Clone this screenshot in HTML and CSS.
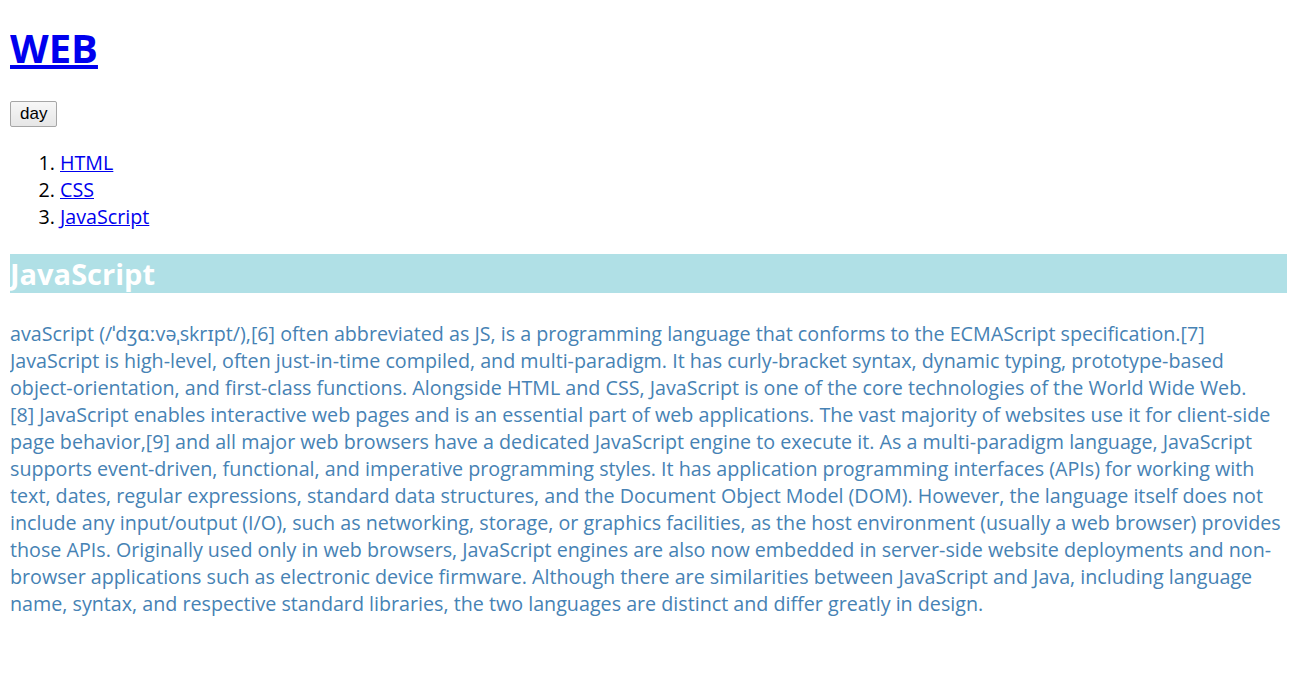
FILE: index.html
```html
<!DOCTYPE html>
<html>
<head>
<meta charset="utf-8">
<title>WEB</title>
<link rel="stylesheet" href="styles.css">
</head>
<body>
<h1 class="site-title"><a href="#">WEB</a></h1>
<input class="mode-btn" type="button" value="day">
<ol class="nav">
  <li><a href="#">HTML</a></li>
  <li><a href="#">CSS</a></li>
  <li><a href="#">JavaScript</a></li>
</ol>
<h2 class="topic">JavaScript</h2>
<p class="article">avaScript (/ˈdʒɑːvəˌskrɪpt/),[6] often abbreviated as JS, is a programming language that conforms to the ECMAScript specification.[7] JavaScript is high-level, often just-in-time compiled, and multi-paradigm. It has curly-bracket syntax, dynamic typing, prototype-based object-orientation, and first-class functions. Alongside HTML and CSS, JavaScript is one of the core technologies of the World Wide Web.<br>[8] JavaScript enables interactive web pages and is an essential part of web applications. The vast majority of websites use it for client-side page behavior,[9] and all major web browsers have a dedicated JavaScript engine to execute it. As a multi-paradigm language, JavaScript supports event-driven, functional, and imperative programming styles. It has application programming interfaces (APIs) for working with text, dates, regular expressions, standard data structures, and the Document Object Model (DOM). However, the language itself does not include any input/output (I/O), such as networking, storage, or graphics facilities, as the host environment (usually a web browser) provides those APIs. Originally used only in web browsers, JavaScript engines are also now embedded in server-side website deployments and non-browser applications such as electronic device firmware. Although there are similarities between JavaScript and Java, including language name, syntax, and respective standard libraries, the two languages are distinct and differ greatly in design.</p>
</body>
</html>
```
FILE: styles.css
```css
html, body {
  background: #ffffff;
}
body {
  margin: 0 5px 0 10px;
  font-family: "Open Sans", "Noto Sans", sans-serif;
  font-size: 19.7px;
  line-height: 27px;
  color: #000000;
}
a {
  color: #0000ee;
}
.site-title {
  font-size: 40px;
  line-height: 53px;
  font-weight: bold;
  margin: 21px 0 27px;
}
.mode-btn {
  display: block;
  height: 26px;
  margin: 0;
  padding: 0 9px;
  font-family: "Liberation Sans", Arial, sans-serif;
  font-size: 17px;
  color: #000;
  background: linear-gradient(#f7f7f7, #e6e6e6);
  border: 1px solid #a6a6a6;
  border-radius: 2px;
}
.nav {
  margin: 22px 0 0;
  padding-left: 50px;
}
.topic {
  margin: 24px 0 0;
  font-size: 29px;
  line-height: 39px;
  font-weight: bold;
  color: #ffffff;
  background: #b0e0e6;
}
.article {
  margin: 27px 0 0;
  color: #4682b4;
}
```
